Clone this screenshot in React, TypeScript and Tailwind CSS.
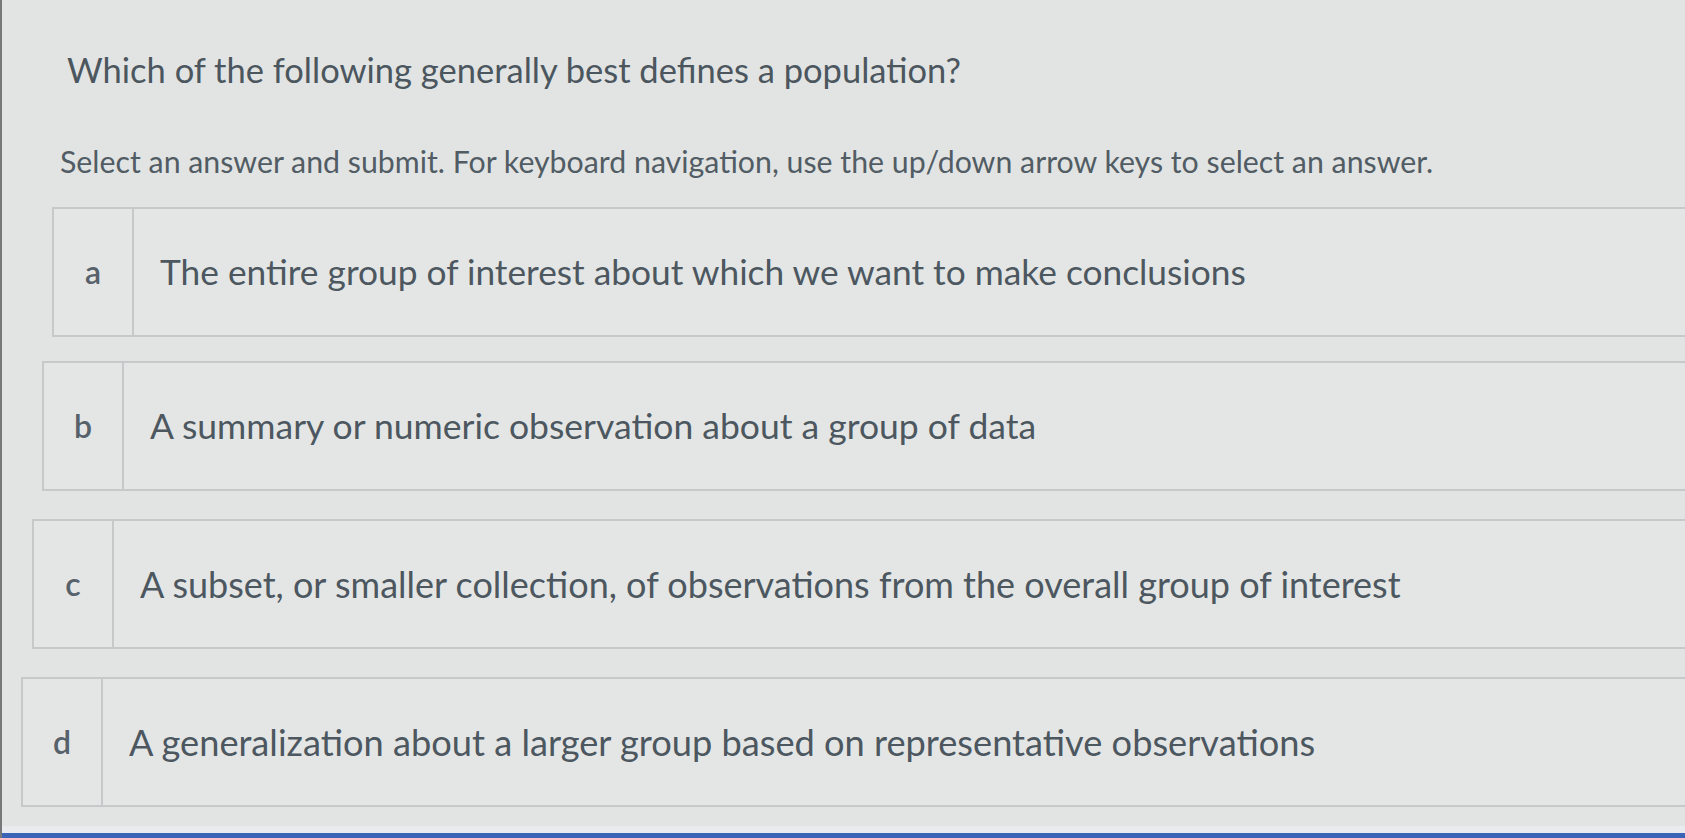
import React from "react";

type Choice = { key: string; text: string; indent: string; gap: string; size: string };

const choices: Choice[] = [
  { key: "a", text: "The entire group of interest about which we want to make conclusions", indent: "ml-[50px]", gap: "mt-[28px]", size: "text-[35.3px]" },
  { key: "b", text: "A summary or numeric observation about a group of data", indent: "ml-[40px]", gap: "mt-[24px]", size: "text-[35.5px]" },
  { key: "c", text: "A subset, or smaller collection, of observations from the overall group of interest", indent: "ml-[30px]", gap: "mt-[28px]", size: "text-[36px]" },
  { key: "d", text: "A generalization about a larger group based on representative observations", indent: "ml-[19px]", gap: "mt-[28px]", size: "text-[36.2px]" },
];

function ChoiceRow({ choice }: { choice: Choice }) {
  return (
    <div
      role="radio"
      aria-checked="false"
      className={`${choice.indent} ${choice.gap} -mr-10 flex h-[130px] border-2 border-[#c6c9c9] bg-[#e4e6e5]`}
    >
      <div className="flex w-[80px] shrink-0 items-center justify-center border-r-2 border-[#c6c9c9] text-[32px] font-semibold text-[#56616a]">
        {choice.key}
      </div>
      <div className={`flex items-center whitespace-nowrap pl-[26px] ${choice.size} text-[#4c5760]`}>{choice.text}</div>
    </div>
  );
}

export default function App() {
  return (
    <div
      className="relative flex h-[838px] w-full flex-col overflow-hidden border-l-2 border-[#75797a] bg-[#e2e4e3]"
      style={{ fontFamily: "Lato, 'Open Sans', sans-serif" }}
    >
      <div className="flex-1">
        <h1 className="ml-[65px] mt-[48px] whitespace-nowrap text-[34.5px] leading-[44px] text-[#4b565e]">
          Which of the following generally best defines a population?
        </h1>
        <p className="ml-[58px] mt-[51px] whitespace-nowrap text-[30.3px] leading-[36px] text-[#515c64]">
          Select an answer and submit. For keyboard navigation, use the up/down arrow keys to select an answer.
        </p>
        <div role="radiogroup">
          {choices.map((c) => (
            <ChoiceRow key={c.key} choice={c} />
          ))}
        </div>
      </div>
      <div className="h-[7px] bg-[#e9ecee]" />
      <div className="h-[5px] bg-[#3b64b6]" />
    </div>
  );
}
